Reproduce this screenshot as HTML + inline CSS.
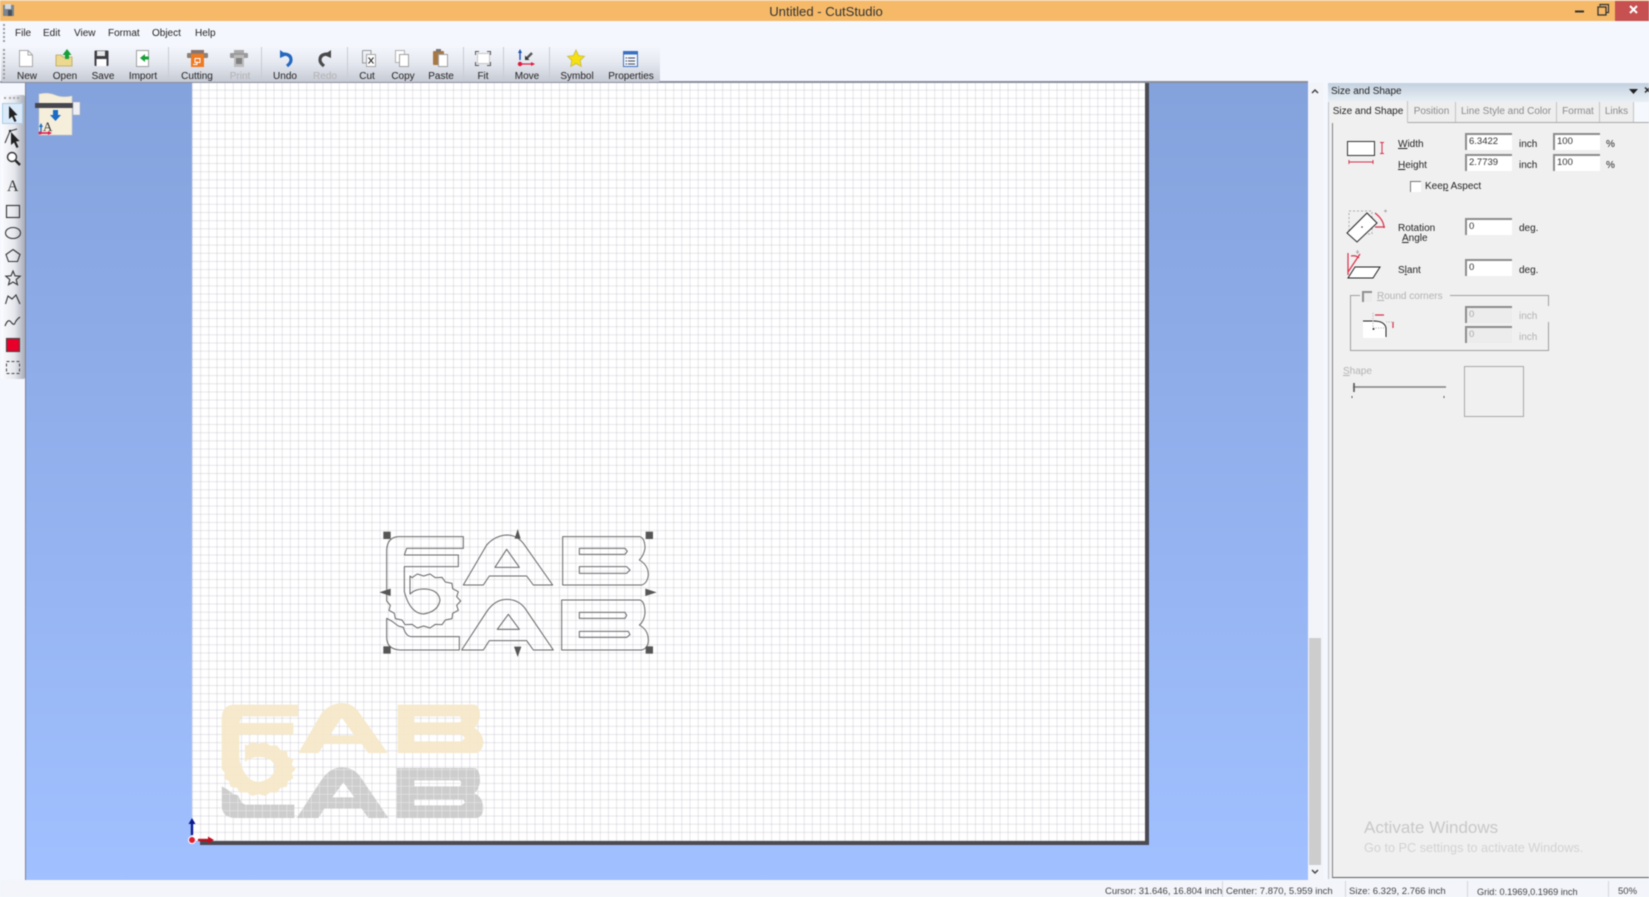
<!DOCTYPE html>
<html><head><meta charset="utf-8"><title>Untitled - CutStudio</title>
<style>
html,body{margin:0;padding:0;background:#f4f7fe}
#r{position:relative;width:1649px;height:897px;overflow:hidden;background:#f4f7fe;font-family:"Liberation Sans",sans-serif;font-size:10px;color:#222;filter:blur(.5px)}
#r div,#r svg{position:absolute}
.t{position:absolute;height:14px;line-height:14px;white-space:nowrap;margin-top:1px}
.c{transform:translateX(-50%)}
.g{color:#8d8d8d}
.d{color:#b2b2b2}
.f{position:absolute;width:47px;height:17px;background:#fff;border-top:2px solid #8c8c8c;border-left:2px solid #8c8c8c;box-sizing:border-box;font-size:9.5px;line-height:12px;padding:1px 0 0 2px;color:#333}
.f.x{background:#ececec;color:#aaa}
.tab{position:absolute;top:102px;height:20px;line-height:19px;text-align:center;background:#eeeeee;color:#8a8a8a;border-right:1px solid #c4c4c4;font-size:10px;box-sizing:border-box}
.s{font-size:9.5px;color:#444}
</style></head><body><div id="r">

<div style="left:0;top:0;width:1649px;height:21px;background:#f5b968;border-top:1px solid #f8d6a4;box-sizing:border-box"></div>
<div style="left:1615px;top:1px;width:34px;height:20px;background:#c75050"></div>
<div class="t c" style="left:826px;top:4px;font-size:13.100px;color:#333">Untitled - CutStudio</div>
<svg style="left:0;top:0" width="1649" height="22">
 <rect x="3" y="5" width="11" height="11" fill="#7b8590"/><rect x="5" y="4" width="6" height="5" fill="#d5d9de"/><rect x="8" y="10" width="4" height="6" fill="#48505a"/>
 <rect x="1575" y="10.500" width="9" height="2" fill="#333"/>
 <rect x="1598" y="7" width="8" height="8" fill="none" stroke="#333" stroke-width="1.300"/><path d="M1600 6V4.500h8.500v8H1606" fill="none" stroke="#333" stroke-width="1.200"/>
 <path d="M1630 6l7 7m0-7l-7 7" stroke="#fff" stroke-width="2"/>
</svg>

<div style="left:3px;top:24px;width:2px;height:18px;border-left:2px dotted #999"></div>
<div class="t" style="left:15px;top:26px">File</div>
<div class="t" style="left:43px;top:26px">Edit</div>
<div class="t" style="left:74px;top:26px">View</div>
<div class="t" style="left:108px;top:26px">Format</div>
<div class="t" style="left:152px;top:26px">Object</div>
<div class="t" style="left:195px;top:26px">Help</div>

<!-- main area -->
<div style="left:26px;top:82px;width:1282px;height:798px;background:linear-gradient(#84a2dc,#a1c0ff)"></div>
<div style="left:0;top:81px;width:1308px;height:2px;background:#8a8f9c"></div>
<div style="left:192px;top:83px;width:953px;height:758px;background:#fff"></div>

<!-- grid -->
<div style="left:192px;top:83px;width:953px;height:758px;background-image:linear-gradient(to right,rgba(140,140,160,.22) 1px,transparent 1px),linear-gradient(to top,rgba(140,140,160,.22) 1px,transparent 1px);background-size:8.160px 8.160px;background-position:left bottom"></div>

<!-- filled logo -->
<svg style="left:205px;top:688.300px" width="300" height="150" viewBox="0 0 900 450">
 <defs>
  <pattern id="gp" width="24.480" height="24.480" patternUnits="userSpaceOnUse">
   <rect width="24.480" height="24.480" fill="#cdcdcd"/>
   <path d="M0 0H24.480M0 0V24.480" stroke="#ededed" stroke-width="3"/>
  </pattern>
 </defs>
 <g fill="#f5e7c8" fill-rule="evenodd" fill-opacity=".93">
  <path d="M280 50H85Q52 52 50 90V243L61 256 57 271 73 280 76 296 96 300 105 314 126 313 142 324 161 318 180 324 196 313 216 314 226 300 246 296 248 280 265 271 260 256 272 243 260 230 265 215 248 206 246 190 226 186 216 172 196 173 180 162 161 168 142 162 126 173 120 168V222Q135 207 160 207 205 207 210 240 205 275 160 282 120 280 103 215V140H265V105H103L110 85H280Z"/>
  <path d="M280 195L350 75Q375 47 410 45 440 45 460 70L548 195H490L470 168H358L340 195ZM375 142H448L410 88Z"/>
  <path d="M578 50H810Q825 55 825 85 822 105 808 120 835 135 835 165 832 190 815 195H578ZM628 85V103H765L772 94 765 85ZM628 140V160H770L780 150 770 140Z"/>
 </g>
 <g fill="url(#gp)" fill-rule="evenodd">
  <path d="M50 295L65 303 85 318 100 322Q108 350 125 350H268V390H90Q52 388 50 355Z"/>
  <path d="M275 390L350 275Q375 238 410 238 445 238 465 265L550 390H490L470 362H358L340 390ZM382 328H448L415 283Z"/>
  <path d="M575 240H810Q825 245 825 280 822 305 808 315 835 330 835 360 835 385 815 390H575ZM628 277V295H765L770 286 765 277ZM628 334V352H770L780 344 775 334Z"/>
 </g>
</svg>

<!-- page shadow -->
<div style="left:1145px;top:83px;width:4px;height:761px;background:#4a4a50"></div>
<div style="left:200px;top:841px;width:949px;height:4px;background:#4a4a50"></div>

<!-- outlined logo -->
<svg style="left:370px;top:520px" width="300" height="150" viewBox="0 0 900 450">
 <g fill="none" stroke="#666" stroke-width="3" stroke-linejoin="round">
  <path d="M280 50H85Q52 52 50 90V243L61 256 57 271 73 280 76 296 96 300 105 314 126 313 142 324 161 318 180 324 196 313 216 314 226 300 246 296 248 280 265 271 260 256 272 243 260 230 265 215 248 206 246 190 226 186 216 172 196 173 180 162 161 168 142 162 126 173 120 168V222Q135 207 160 207 205 207 210 240 205 275 160 282 120 280 103 215V140H265V105H103L110 85H280Z"/>
  <path d="M280 195L350 75Q375 47 410 45 440 45 460 70L548 195H490L470 168H358L340 195ZM375 142H448L410 88Z"/>
  <path d="M578 50H810Q825 55 825 85 822 105 808 120 835 135 835 165 832 190 815 195H578ZM628 85V103H765L772 94 765 85ZM628 140V160H770L780 150 770 140Z"/>
  <path d="M50 295L65 303 85 318 100 322Q108 350 125 350H268V390H90Q52 388 50 355Z"/>
  <path d="M275 390L350 275Q375 238 410 238 445 238 465 265L550 390H490L470 362H358L340 390ZM382 328H448L415 283Z"/>
  <path d="M575 240H810Q825 245 825 280 822 305 808 315 835 330 835 360 835 385 815 390H575ZM628 277V295H765L770 286 765 277ZM628 334V352H770L780 344 775 334Z"/>
 </g>
 <g fill="#555">
  <rect x="40" y="35" width="22" height="22"/><rect x="827" y="35" width="22" height="22"/><rect x="40" y="379" width="22" height="22"/><rect x="827" y="379" width="22" height="22"/>
  <path d="M443 27L452 56H434ZM28 217L62 206V228ZM860 217L826 206V228ZM443 411L432 380H454Z"/>
 </g>
</svg>

<!-- axes -->
<svg style="left:182px;top:810px" width="40" height="40">
 <path d="M10 25V11" stroke="#0c1a90" stroke-width="2.400"/><path d="M10 8L6.500 14H13.500Z" fill="#0c1a90"/>
 <circle cx="10" cy="30" r="3.500" fill="#e02030" stroke="#fff" stroke-width="1"/>
 <path d="M16 30H28" stroke="#c01020" stroke-width="2.400"/><path d="M32 30L26 26.500V33.500Z" fill="#c01020"/>
</svg>

<!-- main toolbar -->
<div style="left:1px;top:46px;width:659px;height:36px;background:linear-gradient(#f5f7fd,#e6e9f1 45%,#c6cad4);border-radius:2px"></div>
<div style="left:3px;top:49px;height:30px;width:2px;border-left:2px dotted #9a9a9a"></div>
<svg style="left:0;top:44px" width="670" height="40">
 <g stroke="#c8ccd4"><path d="M168.500 3V36M261.500 3V36M347.500 3V36M463.500 3V36M503.500 3V36M549.500 3V36"/></g>
 <g transform="translate(0,-44)">
  <path d="M19.500 50.500H28L32.500 55V66.500H19.500Z" fill="#fff" stroke="#a8a8a8"/><path d="M28 50.500V55H32.500" fill="none" stroke="#a8a8a8"/>
  <path d="M56 55H61L63 57H72V66H56Z" fill="#ecd88e" stroke="#b9a45c" stroke-width=".8"/><path d="M67 49L71.500 55H69V59H65V55H62.500Z" fill="#18a038"/>
  <rect x="94.500" y="50.500" width="14" height="15.500" rx="1" fill="#3e3e44"/><rect x="97" y="51" width="8" height="5" fill="#e8e8e8"/><rect x="96.500" y="59" width="10" height="7" fill="#fff"/>
  <path d="M136.500 50.500H148.500V66.500H136.500Z" fill="#fff" stroke="#a0a0a0"/><path d="M140 58L145 54V56.500H149V59.500H145V62Z" fill="#18a038"/>
  <rect x="191" y="50" width="13" height="4" fill="#8a7468"/><rect x="187" y="53" width="21" height="5" rx="1" fill="#8d8078"/><rect x="191" y="54" width="13" height="13" fill="#ee7a22"/><rect x="195" y="58.500" width="5" height="4" fill="none" stroke="#fff"/><path d="M193 64.500h4v-3" fill="none" stroke="#fff"/>
  <rect x="234" y="50" width="10" height="4" fill="#a9a9a9"/><rect x="230" y="53" width="18" height="5" rx="1" fill="#9a9a9a"/><rect x="234" y="55" width="10" height="12" fill="#bcbcbc"/><rect x="236" y="58" width="6" height="6" fill="#808080"/>
  <path d="M280 50L280 58 287 55 Z" fill="#2468c0"/><path d="M283 54Q291 54 291 60 291 63 287 66" fill="none" stroke="#2468c0" stroke-width="3.200"/>
  <path d="M331 50V58L324 55Z" fill="#4a4a4a"/><path d="M328 54Q320 54 320 60 320 63 324 66" fill="none" stroke="#4a4a4a" stroke-width="3.200"/>
  <path d="M362.500 50.500H371V56M362.500 50.500V63H366" fill="none" stroke="#9a9a9a"/><rect x="366.500" y="54.500" width="9" height="12" fill="#fff" stroke="#a5a5a5"/><path d="M368.500 57.500l5 6m0-6l-5 6" stroke="#333" stroke-width="1.100"/>
  <rect x="395.500" y="50.500" width="9" height="12" fill="#fff" stroke="#b0b0b0"/><rect x="399.500" y="54.500" width="9" height="12" fill="#fff" stroke="#a0a0a0"/>
  <rect x="433" y="51" width="11" height="14" rx="1" fill="#a87844"/><rect x="436" y="49" width="5" height="3" fill="#777"/><rect x="438.500" y="54.500" width="9" height="12" fill="#fff" stroke="#a0a0a0"/>
  <rect x="477.500" y="53.500" width="12" height="10" fill="#fff" stroke="#c6c6c6"/><path d="M475.500 55V51.500H479M487 51.500H490.500V55M490.500 62V65.500H487M479 65.500H475.500V62" fill="none" stroke="#555"/>
  <path d="M520 60V52" stroke="#1a50b0" stroke-width="1.400"/><path d="M520 49L518 53H522Z" fill="#1a50b0"/><path d="M532 53L526 59" stroke="#555" stroke-width="2.400"/><path d="M525 60V55.500L529.500 60Z" fill="#333"/><circle cx="520" cy="64" r="2.200" fill="#e01a3c"/><path d="M522 64H532" stroke="#e01a3c" stroke-width="1.200"/><path d="M535 64L531 62V66Z" fill="#e01a3c"/>
  <path d="M576 50L578.600 55.600 584.500 56.300 580.200 60.400 581.300 66.500 576 63.500 570.700 66.500 571.800 60.400 567.500 56.300 573.400 55.600Z" fill="#f5e012" stroke="#c9b84a" stroke-width=".8"/>
  <rect x="623.500" y="51.500" width="14" height="15" fill="#f2f6fd" stroke="#3a70c0"/><rect x="623.500" y="51.500" width="14" height="3" fill="#3a70c0"/><path d="M628 58h7M628 61h7M628 64h7M625.500 58h1.500M625.500 61h1.500M625.500 64h1.500" stroke="#445"/>
 </g>
</svg>
<div class="t c" style="left:27px;top:69px">New</div>
<div class="t c" style="left:65px;top:69px">Open</div>
<div class="t c" style="left:103px;top:69px">Save</div>
<div class="t c" style="left:143px;top:69px">Import</div>
<div class="t c" style="left:197px;top:69px">Cutting</div>
<div class="t c d" style="left:240px;top:69px">Print</div>
<div class="t c" style="left:285px;top:69px">Undo</div>
<div class="t c d" style="left:325px;top:69px">Redo</div>
<div class="t c" style="left:367px;top:69px">Cut</div>
<div class="t c" style="left:403px;top:69px">Copy</div>
<div class="t c" style="left:441px;top:69px">Paste</div>
<div class="t c" style="left:483px;top:69px">Fit</div>
<div class="t c" style="left:527px;top:69px">Move</div>
<div class="t c" style="left:577px;top:69px">Symbol</div>
<div class="t c" style="left:631px;top:69px">Properties</div>

<!-- left strip -->
<div style="left:25px;top:83px;width:1px;height:797px;background:#7b8392"></div>
<div style="left:1px;top:95px;width:24px;height:284px;background:linear-gradient(to right,#fbfcff,#e6e8ee 55%,#a9adb8);border-radius:2px"></div>
<div style="left:4px;top:97px;width:15px;height:1px;border-top:2px dotted #a5a5a5"></div>
<div style="left:2px;top:103px;width:21px;height:21px;background:#dbeaf9;border:1px solid #a9cde8;box-sizing:border-box"></div>
<svg style="left:0;top:90px" width="26" height="292">
 <g transform="translate(0,-90)">
  <path d="M9 106V119L12 116.500 14.500 122 16.500 121 14 115.500 17.500 115Z" fill="#222"/>
  <path d="M5 143L10 131 17 129" fill="none" stroke="#333"/><path d="M11 132V145L14 142.500 16.500 148 18.500 147 16 141.500 19.500 141Z" fill="#222"/><circle cx="10" cy="131" r="1.200" fill="#222"/>
  <circle cx="12" cy="157" r="4.500" fill="#fff" stroke="#333" stroke-width="1.400"/><path d="M15.500 160.500L20 165" stroke="#222" stroke-width="2.400"/>
  <rect x="6.500" y="205.500" width="13" height="12" fill="none" stroke="#333" stroke-width="1.100"/>
  <ellipse cx="13" cy="233" rx="7.500" ry="5.500" fill="none" stroke="#333" stroke-width="1.100"/>
  <path d="M13 249.500L20 254.500 17.500 261.500H8.500L6 254.500Z" fill="none" stroke="#333" stroke-width="1.100"/>
  <path d="M13 271L15 275.800 20.200 276.200 16.200 279.600 17.500 284.700 13 282 8.500 284.700 9.800 279.600 5.800 276.200 11 275.800Z" fill="none" stroke="#333" stroke-width="1.100"/>
  <path d="M5.500 304L8 296 12 299 16 295 20 304" fill="none" stroke="#333" stroke-width="1.100"/>
  <path d="M5 326Q8 318 11 322T15 323 20 317" fill="none" stroke="#333" stroke-width="1.100"/>
  <rect x="6.500" y="338.500" width="13" height="13" fill="#e8002a" stroke="#444" stroke-width="1.100"/>
  <rect x="6.500" y="361.500" width="13" height="12" fill="none" stroke="#444" stroke-dasharray="3 2"/>
 </g>
</svg>
<div class="t" style="left:7px;top:178px;font-family:'Liberation Serif',serif;font-size:16px;line-height:16px;height:16px;color:#333">A</div>

<!-- printer icon -->
<svg style="left:30px;top:90px" width="55" height="50">
 <g transform="translate(-30,-90)">
  <path d="M39 94Q48 92 55 95T72 96V135H39Z" fill="#f5eedb" stroke="#d0ccc0" stroke-width=".6"/>
  <rect x="35" y="103" width="45" height="5" fill="#46464e"/>
  <rect x="73" y="102" width="7" height="13" fill="#eef0f4" stroke="#aaa" stroke-width=".5"/>
  <path d="M53 110H58V115H61L55.500 121 50 115H53Z" fill="#1a6cc4"/>
  <path d="M41 132V126" stroke="#1a6cc4" stroke-width="1.400"/><path d="M41 123L39 127H43Z" fill="#1a6cc4"/>
  <path d="M41 133H50" stroke="#e01a4c" stroke-width="1.600"/><circle cx="40" cy="133" r="1.500" fill="#e01a4c"/><path d="M52 133L48 131V135Z" fill="#e01a4c"/>
 </g>
</svg>
<div class="t" style="left:43px;top:119px;font-family:'Liberation Serif',serif;font-size:13px;color:#333">A</div>

<!-- scrollbar -->
<div style="left:1308px;top:83px;width:15px;height:797px;background:#f2f4fa"></div>
<div style="left:1309px;top:638px;width:12px;height:227px;background:#cdcdcd"></div>
<svg style="left:1308px;top:83px" width="15" height="797">
 <path d="M4 10L7 7 10 10" fill="none" stroke="#444" stroke-width="1.500"/>
 <path d="M4 787L7 790 10 787" fill="none" stroke="#444" stroke-width="1.500"/>
</svg>

<!-- side panel -->
<div style="left:1328px;top:83px;width:321px;height:19px;background:linear-gradient(#c3d1df,#e9eff5)"></div>
<div class="t" style="left:1331px;top:84px">Size and Shape</div>
<svg style="left:1625px;top:84px" width="24" height="16">
 <path d="M4 5H13L8.500 10Z" fill="#222"/><path d="M20 3.500l5 5m0-5l-5 5" stroke="#222" stroke-width="1.400"/>
</svg>
<div style="left:1328px;top:102px;width:321px;height:20px;background:#f5f8fc"></div>
<div style="left:1328px;top:122px;width:321px;height:757px;background:#f0f0f0"></div>
<div style="left:1328px;top:102px;width:1px;height:777px;background:#c0c4c8"></div>
<div style="left:1332px;top:122px;width:317px;height:756px;border-left:1px solid #808088;border-top:1px solid #a8a8ac;border-bottom:1px solid #606068;box-sizing:border-box"></div>
<div class="tab" style="left:1329px;width:79px;top:101px;height:22px;line-height:21px;background:#f0f0f0;color:#222">Size and Shape</div>
<div class="tab" style="left:1408px;width:48px">Position</div>
<div class="tab" style="left:1456px;width:101px">Line Style and Color</div>
<div class="tab" style="left:1557px;width:43px">Format</div>
<div class="tab" style="left:1600px;width:34px">Links</div>

<div class="t" style="left:1398px;top:136.500px"><u>W</u>idth</div>
<div class="t" style="left:1398px;top:157.500px"><u>H</u>eight</div>
<div class="f" style="left:1465px;top:133px">6.3422</div>
<div class="f" style="left:1465px;top:154px">2.7739</div>
<div class="f" style="left:1553px;top:133px">100</div>
<div class="f" style="left:1553px;top:154px">100</div>
<div class="t" style="left:1519px;top:136.500px">inch</div>
<div class="t" style="left:1519px;top:157.500px">inch</div>
<div class="t" style="left:1606px;top:136.500px">%</div>
<div class="t" style="left:1606px;top:157.500px">%</div>

<div style="left:1410px;top:181px;width:11px;height:11px;background:#fff;border-top:1px solid #777;border-left:1px solid #777;box-sizing:border-box"></div>
<div class="t" style="left:1425px;top:178.500px">Kee<u>p</u> Aspect</div>

<div class="t" style="left:1398px;top:220.500px">Rotation</div>
<div class="t" style="left:1402px;top:231px"><u>A</u>ngle</div>
<div class="f" style="left:1465px;top:218px">0</div>
<div class="t" style="left:1519px;top:221px">deg.</div>
<div class="t" style="left:1398px;top:262.500px">S<u>l</u>ant</div>
<div class="f" style="left:1465px;top:259px">0</div>
<div class="t" style="left:1519px;top:262.500px">deg.</div>

<!-- group box -->
<div style="left:1350px;top:295px;width:199px;height:56px;border:1px solid #a0a0a0;box-sizing:border-box"></div>
<div style="left:1360px;top:290px;width:90px;height:12px;background:#f0f0f0"></div>
<div style="left:1545px;top:306px;width:6px;height:16px;background:#f0f0f0"></div>
<div style="left:1362px;top:291px;width:10px;height:11px;background:#ececec;border-top:2px solid #8f8f8f;border-left:2px solid #8f8f8f;box-sizing:border-box"></div>
<div class="t d" style="left:1377px;top:289px"><u>R</u>ound corners</div>
<div class="f x" style="left:1465px;top:306px">0</div>
<div class="f x" style="left:1465px;top:326px">0</div>
<div class="t d" style="left:1519px;top:309px">inch</div>
<div class="t d" style="left:1519px;top:330px">inch</div>
<div class="t d" style="left:1343px;top:364px"><u>S</u>hape</div>
<div style="left:1464px;top:366px;width:60px;height:51px;border:1px solid #a8a8a8;box-sizing:border-box"></div>

<!-- dialog icons -->
<svg style="left:1340px;top:130px" width="120" height="280">
 <g transform="translate(-1340,-130)">
  <rect x="1347.500" y="141.500" width="27" height="14" fill="#fff" stroke="#333"/>
  <path d="M1382 143V153M1380 142.500h4M1380 153.500h4M1349 162H1373M1349 160v4M1373 160v4" stroke="#d8304a"/>
  <path d="M1349 211H1372V234H1349Z" fill="none" stroke="#aaa" stroke-dasharray="2 2"/>
  <path d="M1347 233L1367 213 1377 223 1357 242Z" fill="#fff" stroke="#222"/>
  <circle cx="1362" cy="227" r=".8" fill="#333"/>
  <path d="M1375 213Q1384 220 1384 228M1375 227H1385" fill="none" stroke="#d8304a" stroke-width="1.200"/>
  <path d="M1384 211h3M1385.500 209.500v3" fill="none" stroke="#aaa"/>
  <path d="M1348 278L1355 267H1380L1373 278Z" fill="#fff" stroke="#222"/>
  <path d="M1348 253V275M1348 272L1360 254M1351 256Q1356 255 1359 258" fill="none" stroke="#d8304a" stroke-width="1.200"/>
  <path d="M1356 252h3M1357.500 250v4" stroke="#aaa"/>
  <rect x="1363" y="322" width="23" height="16" fill="#fff"/>
  <path d="M1363 321H1373Q1385 321 1386 328V337" fill="none" stroke="#222"/>
  <path d="M1373 313V327M1386 322h8M1373 328h12" stroke="#aaa" stroke-dasharray="1 1.500" fill="none"/>
  <circle cx="1373.500" cy="329" r="1" fill="#333"/>
  <path d="M1375 315H1384M1393 322V328" stroke="#d8304a" stroke-width="1.200"/>
  <path d="M1353 387H1446" stroke="#808080" stroke-width="1.400"/>
  <path d="M1354 383V392" stroke="#555" stroke-width="1.600"/>
  <path d="M1352 396v2M1444 396v2" stroke="#555"/>
 </g>
</svg>

<!-- activation watermark -->
<div class="t" style="left:1364px;top:817px;height:20px;line-height:20px;font-size:17px;color:#c8c8c8">Activate Windows</div>
<div class="t" style="left:1364px;top:840px;font-size:12.700px;color:#d2d2d2">Go to PC settings to activate Windows.</div>

<!-- status bar -->
<div style="left:0;top:880px;width:1649px;height:17px;background:#f3f5fa"></div>
<div style="left:1222px;top:881px;width:1px;height:16px;background:#d5d7dc"></div>
<div style="left:1345px;top:881px;width:1px;height:16px;background:#d5d7dc"></div>
<div style="left:1467px;top:881px;width:1px;height:16px;background:#d5d7dc"></div>
<div style="left:1608px;top:881px;width:1px;height:16px;background:#d5d7dc"></div>
<div class="t s" style="left:1105px;top:884px">Cursor: 31.646, 16.804 inch</div>
<div class="t s" style="left:1226px;top:884px">Center: 7.870, 5.959 inch</div>
<div class="t s" style="left:1349px;top:884px">Size: 6.329, 2.766 inch</div>
<div class="t s" style="left:1477px;top:884px;font-size:9.200px">Grid: 0.1969,0.1969 inch</div>
<div class="t s" style="left:1618px;top:884px">50%</div>

</div></body></html>
